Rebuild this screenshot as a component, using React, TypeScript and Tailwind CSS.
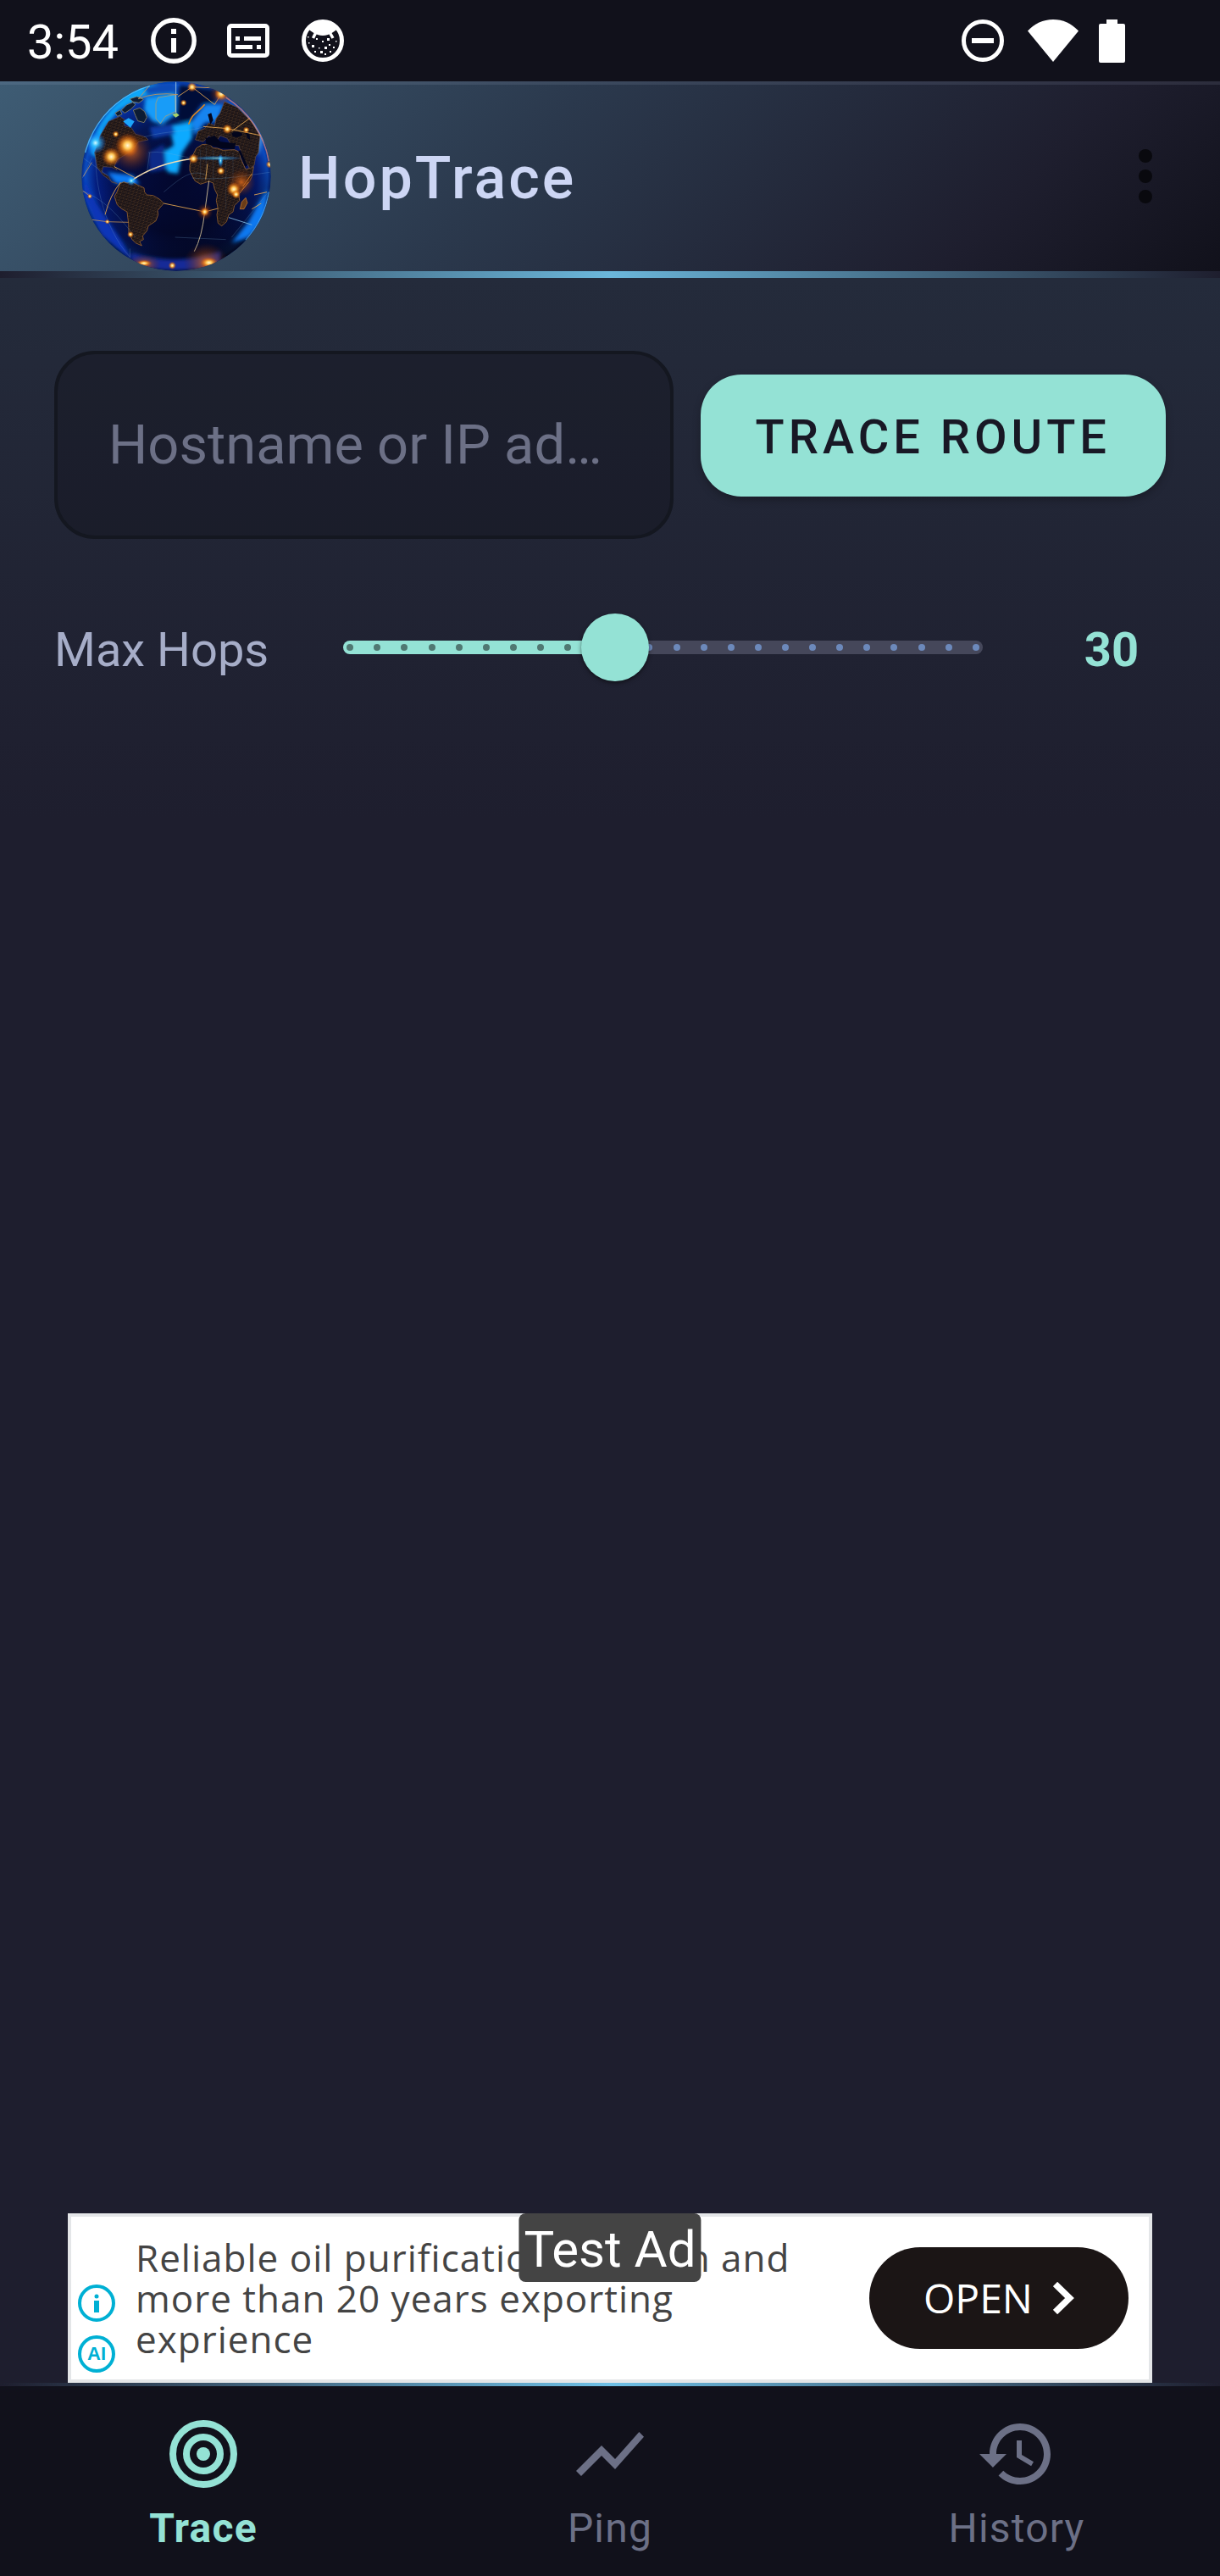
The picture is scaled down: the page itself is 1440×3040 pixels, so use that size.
import { useState } from "react";

const MIN_HOPS = 5;
const MAX_HOPS = 64;
const TICKS = Array.from({ length: 24 }, (_, i) => i);

function InfoIcon() {
  return (
    <svg className="size-[54px]" viewBox="0 0 54 54" fill="none" aria-hidden="true">
      <circle cx="27" cy="27" r="24.2" stroke="#fff" strokeWidth="5.4" />
      <path d="M24 13h6v6h-6zM24 24h6v17h-6z" fill="#fff" />
    </svg>
  );
}

function CaptionsIcon() {
  return (
    <svg className="h-10 w-[50px]" viewBox="0 0 50 40" fill="none" aria-hidden="true">
      <rect x="2.5" y="2.5" width="45" height="35" rx="2.5" stroke="#fff" strokeWidth="5" />
      <path d="M10 15h5v5h-5zM20 15h20v5H20zM10 25h20v5H10zM35 25h5v5h-5z" fill="#fff" />
    </svg>
  );
}

function CatIcon() {
  return (
    <svg className="size-[50px]" viewBox="0 0 50 50" fill="none" aria-hidden="true">
      <circle cx="25" cy="25" r="22.5" stroke="#fff" strokeWidth="5" />
      <path d="M8 11 C14 2 36 2 42 11 L40 13 Q35 17 31 18 Q25 20 19 18 Q15 17 10 13 Z" fill="#fff" />
      <path d="M33 15 L37 22 M17 15 L13.500 22" stroke="#fff" strokeWidth="3.5" />
      <path
        d="M7 20h1.500v1.500H7zM17 22h2v2h-2zM30 22h3v3h-3zM24 25h2v2h-2zM40 25h1.500v1.500H40zM8 27h1.500v1.500H8zM12 30h3v3h-3zM32 29h2v2h-2zM27 32h3v3h-3zM20 33h1.500v1.500H20zM37 32h2v2h-2zM15 37h2v2h-2zM22 37h3v3h-3zM33 37h2v2h-2zM27 40h2v2h-2z"
        fill="#fff"
      />
    </svg>
  );
}

function DoNotDisturbIcon() {
  return (
    <svg className="size-[50px]" viewBox="0 0 50 50" fill="none" aria-hidden="true">
      <circle cx="25" cy="25" r="22.5" stroke="#fff" strokeWidth="5" />
      <path d="M12 22h26v6H12z" fill="#fff" />
    </svg>
  );
}

function WifiIcon() {
  return (
    <svg className="h-[50px] w-[60px]" viewBox="0 0 60 50" aria-hidden="true">
      <path d="M0 13.500C8 5 18 0 30 0s22 5 30 13.500L30 50Z" fill="#fff" />
    </svg>
  );
}

function BatteryIcon() {
  return (
    <svg className="h-[51px] w-[31px]" viewBox="0 0 31 51" aria-hidden="true">
      <path d="M9 0h13v5h7a2 2 0 0 1 2 2v42a2 2 0 0 1-2 2H2a2 2 0 0 1-2-2V7a2 2 0 0 1 2-2h7z" fill="#fff" />
    </svg>
  );
}

function GlobeLogo() {
  return (
    <svg className="size-56 shrink-0" viewBox="108 48 672 672" role="img" aria-label="HopTrace logo">
      <defs>
        <radialGradient id="ocean" cx="0.5" cy="0.5" r="0.5">
          <stop offset="0" stopColor="#030830" />
          <stop offset="0.6" stopColor="#030c44" />
          <stop offset="0.85" stopColor="#04208a" />
          <stop offset="0.96" stopColor="#0c54d4" />
          <stop offset="1" stopColor="#062c8c" />
        </radialGradient>
        <linearGradient id="shade" x1="0.35" y1="0" x2="0.6" y2="1">
          <stop offset="0" stopColor="#0a5fe0" stopOpacity="0.35" />
          <stop offset="0.5" stopColor="#03061c" stopOpacity="0.1" />
          <stop offset="1" stopColor="#03020c" stopOpacity="0.95" />
        </linearGradient>
        <radialGradient id="spark">
          <stop offset="0" stopColor="#fff8d8" />
          <stop offset="0.3" stopColor="#ffc858" />
          <stop offset="0.6" stopColor="#f58418" stopOpacity="0.6" />
          <stop offset="1" stopColor="#c04400" stopOpacity="0" />
        </radialGradient>
        <radialGradient id="ice">
          <stop offset="0" stopColor="#d8fbff" />
          <stop offset="0.3" stopColor="#38c4ff" stopOpacity="0.9" />
          <stop offset="1" stopColor="#0a6cff" stopOpacity="0" />
        </radialGradient>
        <radialGradient id="ember">
          <stop offset="0" stopColor="#e8701c" stopOpacity="0.8" />
          <stop offset="1" stopColor="#6a2000" stopOpacity="0" />
        </radialGradient>
        <pattern id="lights" width="13" height="11" patternUnits="userSpaceOnUse" patternTransform="rotate(17)">
          <rect width="13" height="11" fill="#1c1416" />
          <circle cx="3" cy="3" r="1.800" fill="#7d5430" />
          <circle cx="10" cy="5" r="1.500" fill="#5e4c40" />
          <circle cx="6" cy="9" r="1.300" fill="#6c4a2c" />
        </pattern>
        <filter id="soft" x="-30%" y="-30%" width="160%" height="160%">
          <feGaussianBlur stdDeviation="7" />
        </filter>
        <clipPath id="disc">
          <circle cx="444" cy="384" r="335" />
        </clipPath>
      </defs>
      <g clipPath="url(#disc)">
        <circle cx="444" cy="384" r="336" fill="url(#ocean)" />
        <circle cx="444" cy="384" r="336" fill="url(#shade)" />
        <g filter="url(#soft)">
          <path d="M140 300 C160 180 260 80 350 55 L440 62 L440 95 L330 100 L240 150 L190 210 L160 320Z" fill="#10a8f8" />
          <path d="M335 105 L445 95 L442 165 L395 200 L360 190 L330 150Z" fill="#149cfa" />
          <path d="M420 205 L500 190 L500 250 L465 300 L450 375 L415 370 L385 305 L435 275Z" fill="#0eaaff" />
          <path d="M350 210 L430 200 L440 235 L360 250Z" fill="#0a3ca8" />
          <path d="M345 300 L400 270 L410 360 L350 370Z" fill="#082c88" />
          <path d="M545 130 L612 128 L590 190 L545 195 L510 240 L498 190Z" fill="#1284f0" />
          <path d="M650 140 L720 190 L755 250 L735 310 L690 220Z" fill="#3d84d8" />
          <path d="M768 430 L755 540 L700 600 L640 620 L700 545 L735 480Z" fill="#0c78f0" />
          <path d="M112 380 L125 470 L180 590 L290 685 L255 620 L160 480Z" fill="#0a34b8" />
          <path d="M200 370 L290 380 L315 412 L230 410Z" fill="#0e7cf4" />
          <path d="M285 655 Q440 705 600 650 L600 700 Q440 735 290 700Z" fill="#142a98" />
          <path d="M330 68 Q390 52 440 56 L440 90 L340 96Z" fill="#0c4cb8" />
          <path d="M455 60 L600 80 L580 125 L530 130 L490 190 L450 185Z" fill="#060c38" />
        </g>
        <g fill="url(#lights)" stroke="#b07230" strokeWidth="2" strokeLinejoin="round">
          <path d="M205 190 L245 172 L262 185 L260 205 L285 212 L300 235 L335 245 L345 255 L310 262 L290 290 L260 310 L235 325 L225 348 L235 362 L215 352 L185 350 L180 370 L205 385 L215 405 L235 410 L215 402 L185 380 L165 355 L155 300 L175 240Z" stroke="#5c4a50" />
          <path d="M245 410 L258 404 L270 408 L285 402 L305 414 L330 425 L332 440 L340 450 L362 452 L385 465 L400 480 L378 505 L380 520 L372 542 L345 560 L340 578 L325 595 L328 608 L314 615 L322 630 L300 620 L288 608 L276 585 L275 550 L270 510 L252 500 L235 485 L225 455 L234 440Z" />
          <path d="M515 285 L535 272 L560 270 L575 284 L590 285 L610 292 L650 290 L668 298 L672 320 L690 360 L718 350 L712 385 L705 400 L685 422 L665 440 L668 470 L650 488 L645 510 L630 520 L622 545 L605 560 L592 550 L588 520 L592 500 L586 470 L590 450 L580 430 L575 408 L560 402 L530 412 L510 400 L492 365 L492 345 L500 315Z" />
          <path d="M670 500 L676 475 L690 460 L696 478 L684 500Z" stroke="#e08a30" fill="#6a3c18" />
          <path d="M512 255 L522 225 L545 215 L560 195 L580 205 L585 180 L600 160 L615 120 L660 140 L710 190 L740 240 L735 300 L725 315 L720 345 L705 358 L682 320 L665 275 L640 275 L625 250 L600 240 L585 262 L560 240 L540 262Z" stroke="#6c5040" />
        </g>
        <g fill="#0c1c34" stroke="#8a8468" strokeWidth="2.500">
          <path d="M250 150 L268 132 L290 122 L300 130 L284 146 L262 160Z" />
          <path d="M280 110 L305 102 L328 112 L312 124 L290 120Z" />
          <path d="M292 150 L315 142 L332 155 L340 175 L330 194 L308 188 L300 170Z" />
          <path d="M228 160 L245 150 L252 164 L236 172Z" />
        </g>
        <g fill="#02051c">
          <path d="M548 250 L580 240 L600 262 L655 268 L650 288 L600 284 L550 270Z" />
          <path d="M640 232 Q660 218 680 235 Q668 250 645 244Z" />
          <path d="M556 165 L568 160 L575 185 L565 200Z" />
          <path d="M690 230 L702 225 L706 255 L696 250Z" />
          <path d="M664 295 L672 292 L696 345 L688 350Z" />
        </g>
        <path d="M256 190 L275 178 L296 190 L282 212Z" fill="#1ca4fa" />
        <path d="M372 125 L380 105 L440 95 L442 155 L405 172 L388 198 L372 180Z" fill="#189cf8" stroke="#c9a05a" strokeWidth="2" />
        <path d="M430 165 L445 160 L455 168 L442 176Z" fill="#a8d068" />
        <g fill="none" stroke="#7ab0d8" strokeOpacity="0.45" strokeWidth="1.600">
          <path d="M443 50 L443 160" stroke="#c8e4e8" strokeOpacity="0.9" strokeWidth="2.500" />
          <path d="M160 270 C150 380 180 560 280 670" />
          <path d="M115 320 L200 380 M112 390 L145 320 M110 435 C200 470 250 540 300 600" />
          <path d="M345 300 C420 290 480 330 560 320 M350 300 L340 375" />
          <path d="M400 440 C470 380 500 360 550 380 M640 600 L770 440 M330 245 C420 220 470 230 540 210" />
          <path d="M775 370 C700 380 600 400 500 390" />
          <path d="M630 530 L712 556" strokeWidth="3" strokeOpacity="0.9" />
          <path d="M280 640 L280 672 M440 600 L620 608" />
          <path d="M530 290 V390 M550 280 V385 M575 290 V400 M620 295 V500 M645 300 V420" strokeOpacity="0.25" />
        </g>
        <g fill="none" stroke="#e8a850" strokeWidth="2.600">
          <path d="M350 62 L310 110 Q370 85 450 95" stroke="#c89458" />
          <path d="M450 102 L500 68 L590 72 M500 68 L580 130 L605 90" />
          <path d="M545 130 C520 160 500 160 488 200" strokeWidth="5" stroke="#d88424" />
          <path d="M540 208 L625 215 L745 240" />
          <path d="M705 178 L640 225" />
          <path d="M285 400 Q370 340 500 322" stroke="#f4dcb0" strokeWidth="4.500" />
          <path d="M247 405 Q210 450 192 520" />
          <path d="M400 480 L545 510 L592 498" />
          <path d="M560 400 L545 510 Q535 600 508 650" stroke="#dcc89c" />
          <path d="M145 538 L200 545 L275 547 M112 435 L140 455 M115 385 L145 335" strokeWidth="2" />
          <path d="M555 340 L548 395 M225 350 L300 390" />
          <path d="M765 440 L720 450 M712 500 L745 480" />
          <path d="M680 420 L712 375 M668 445 L700 405" stroke="#f0922c" />
        </g>
        <circle cx="285" cy="295" r="75" fill="url(#ember)" />
        <circle cx="675" cy="405" r="50" fill="url(#ember)" />
        <ellipse cx="550" cy="690" rx="80" ry="70" fill="url(#ember)" />
        <ellipse cx="330" cy="695" rx="60" ry="34" fill="url(#ember)" />
        <circle cx="545" cy="510" r="30" fill="url(#ember)" />
        <circle cx="605" cy="90" r="44" fill="url(#ember)" />
        <g fill="url(#spark)">
          <circle cx="272" cy="275" r="42" />
          <circle cx="214" cy="315" r="34" />
          <circle cx="230" cy="235" r="12" />
          <circle cx="648" cy="430" r="26" />
          <circle cx="656" cy="448" r="16" />
          <circle cx="545" cy="510" r="16" />
          <circle cx="625" cy="217" r="18" />
          <circle cx="602" cy="365" r="15" />
          <circle cx="500" cy="68" r="18" />
          <circle cx="603" cy="92" r="24" />
          <circle cx="505" cy="322" r="18" />
          <circle cx="692" cy="220" r="12" />
          <circle cx="138" cy="455" r="9" />
          <circle cx="200" cy="545" r="9" />
          <circle cx="282" cy="590" r="12" />
          <circle cx="470" cy="124" r="12" />
          <ellipse cx="560" cy="690" rx="32" ry="20" />
          <ellipse cx="330" cy="692" rx="28" ry="12" />
          <circle cx="430" cy="700" r="14" />
          <circle cx="775" cy="342" r="14" />
        </g>
        <g fill="url(#ice)">
          <circle cx="158" cy="266" r="38" />
          <circle cx="285" cy="400" r="18" />
          <ellipse cx="601" cy="328" rx="10" ry="24" />
          <ellipse cx="590" cy="320" rx="90" ry="9" fillOpacity="0.6" />
        </g>
        <path d="M120 300 A335 335 0 0 1 350 62" fill="none" stroke="#5cc8ff" strokeWidth="8" strokeOpacity="0.8" />
        <path d="M620 105 A335 335 0 0 1 772 330" fill="none" stroke="#e08878" strokeWidth="5" strokeOpacity="0.7" />
        <path d="M772 440 A335 335 0 0 1 690 610" fill="none" stroke="#4aa4f0" strokeWidth="4" strokeOpacity="0.8" />
      </g>
    </svg>
  );
}

function TargetIcon() {
  return (
    <svg className="size-24" viewBox="0 0 24 24" fill="none" stroke="currentColor" strokeWidth="2" aria-hidden="true">
      <circle cx="12" cy="12" r="9" />
      <circle cx="12" cy="12" r="5" />
      <circle cx="12" cy="12" r="2" fill="currentColor" stroke="none" />
    </svg>
  );
}

function ChartIcon() {
  return (
    <svg className="size-24" viewBox="0 0 24 24" fill="currentColor" aria-hidden="true">
      <path d="M3.500 18.490l6-6.010 4 4L22 6.920l-1.410-1.410-7.090 7.970-4-4L2 16.990z" />
    </svg>
  );
}

function HistoryIcon() {
  return (
    <svg className="size-24" viewBox="0 0 24 24" fill="currentColor" aria-hidden="true">
      <path d="M13 3c-4.970 0-9 4.030-9 9H1l3.890 3.890.07.14L9 12H6c0-3.870 3.130-7 7-7s7 3.130 7 7-3.130 7-7 7c-1.930 0-3.680-.790-4.940-2.060l-1.420 1.420C8.270 19.990 10.510 21 13 21c4.970 0 9-4.030 9-9s-4.030-9-9-9zm-1 5v5l4.280 2.540.720-1.210-3.500-2.080V8H12z" />
    </svg>
  );
}

function HopSlider({ value, onChange }: { value: number; onChange: (v: number) => void }) {
  const ratio = (value - MIN_HOPS) / (MAX_HOPS - MIN_HOPS);
  return (
    <div className="relative flex h-20 flex-1 items-center px-8">
      <div
        className="flex h-4 w-full items-center justify-between rounded-full px-1"
        style={{
          backgroundImage: `linear-gradient(to right, #94e2d5 ${ratio * 100}%, #45475a ${ratio * 100}%)`,
        }}
      >
        {TICKS.map((i) => (
          <span
            key={i}
            className={
              i / (TICKS.length - 1) <= ratio
                ? "size-2 rounded-full bg-[#507872]"
                : "size-2 rounded-full bg-[#6c89bb]"
            }
          />
        ))}
      </div>
      <input
        id="max-hops"
        type="range"
        min={MIN_HOPS}
        max={MAX_HOPS}
        value={value}
        onChange={(e) => onChange(Number(e.target.value))}
        className="absolute inset-0 h-20 w-full cursor-pointer appearance-none bg-transparent [&::-webkit-slider-thumb]:size-20 [&::-webkit-slider-thumb]:appearance-none [&::-webkit-slider-thumb]:rounded-full [&::-webkit-slider-thumb]:bg-[#94e2d5] [&::-webkit-slider-thumb]:shadow-[0_2px_5px_rgba(0,0,0,0.5)]"
      />
    </div>
  );
}

const NAV_ITEMS = [
  { label: "Trace", Icon: TargetIcon },
  { label: "Ping", Icon: ChartIcon },
  { label: "History", Icon: HistoryIcon },
];

export default function App() {
  const [hops, setHops] = useState(30);
  const [tab, setTab] = useState("Trace");

  return (
    <div className="flex min-h-screen flex-col bg-[#1e1e2e] font-[Roboto,sans-serif]">
      <div className="flex h-24 items-center justify-between bg-[#11111b] pr-28 pl-8 text-white">
        <div className="flex items-center">
          <span className="pt-1 text-[56px] leading-none">3:54</span>
          <div className="ml-[38px] flex items-center gap-9">
            <InfoIcon />
            <CaptionsIcon />
            <div className="ml-0.5">
              <CatIcon />
            </div>
          </div>
        </div>
        <div className="flex items-center">
          <DoNotDisturbIcon />
          <div className="ml-7">
            <WifiIcon />
          </div>
          <div className="ml-6">
            <BatteryIcon />
          </div>
        </div>
      </div>

      <header>
        <div className="flex h-56 items-center bg-[linear-gradient(135deg,#3e5c74_0%,#2b394d_42%,#1e1e2e_80%,#11111b_100%)] pl-24 shadow-[inset_0_4px_0_rgba(205,214,244,0.1)]">
          <GlobeLogo />
          <h1 className="ml-8 flex-1 pt-1 text-[70px] leading-none font-medium tracking-[3px] text-[#cdd6f4]">
            HopTrace
          </h1>
          <button type="button" aria-label="More options" className="mr-10 flex size-24 flex-col items-center justify-center gap-2">
            <span className="size-4 rounded-full bg-[#09090e]" />
            <span className="size-4 rounded-full bg-[#09090e]" />
            <span className="size-4 rounded-full bg-[#09090e]" />
          </button>
        </div>
        <div className="h-2 bg-[linear-gradient(to_right,#1e1e2e,#6bb7db,#1e1e2e)]" />
      </header>

      <main className="flex flex-1 flex-col bg-[linear-gradient(to_bottom,#242b3b_0px,#1e1e2e_640px)]">
        <form className="flex items-center gap-8 px-16 pt-16" onSubmit={(e) => e.preventDefault()}>
          <input
            type="text"
            aria-label="Hostname or IP address"
            placeholder="Hostname or IP address"
            className="mt-[22px] h-[222px] min-w-0 flex-1 rounded-[48px] border-4 border-[#141720] bg-[#11111b]/40 px-[60px] text-[65px] text-ellipsis text-[#cdd6f4] placeholder:text-[#6c7086]"
          />
          <button
            type="submit"
            className="h-36 rounded-[48px] bg-[#94e2d5] px-[65px] pt-1 text-[56px] leading-none font-medium tracking-[5px] whitespace-nowrap text-[#181825] shadow-[0_4px_10px_rgba(0,0,0,0.25)]"
          >
            TRACE ROUTE
          </button>
        </form>

        <div className="mt-16 flex h-32 items-center px-16">
          <label htmlFor="max-hops" className="pt-1.5 text-[56px] leading-none text-[#a6adc8]">
            Max Hops
          </label>
          <div className="ml-14 flex flex-1">
            <HopSlider value={hops} onChange={setHops} />
          </div>
          <output htmlFor="max-hops" className="ml-14 w-32 pt-1.5 text-center text-[56px] leading-none font-bold text-[#94e2d5]">
            {hops}
          </output>
        </div>

        <div className="flex-1" />

        <aside className="relative mx-20 flex h-[200px] items-center border-4 border-[#e4e6e8] bg-white font-['Open_Sans',sans-serif]">
          <div className="flex h-full w-[76px] shrink-0 flex-col items-start justify-end gap-4 pb-2 pl-2 text-[#00b0d4]">
            <svg className="size-11" viewBox="0 0 44 44" fill="none" aria-hidden="true">
              <circle cx="22" cy="22" r="20" stroke="currentColor" strokeWidth="4" />
              <circle cx="22" cy="14" r="2.500" fill="currentColor" />
              <path d="M19 19h6v14h-6z" fill="currentColor" />
            </svg>
            <span className="flex size-11 items-center justify-center rounded-full border-4 border-current font-['Liberation_Sans',sans-serif] text-[22px] leading-none font-bold">
              AI
            </span>
          </div>
          <p className="flex-1 text-[44px] leading-[48px] tracking-[1px] whitespace-nowrap text-[#444444]">
            Reliable oil purification solution and
            <br />
            more than 20 years exporting
            <br />
            exprience
          </p>
          <a
            href="#open"
            className="mr-6 flex h-[120px] shrink-0 items-center gap-6 rounded-full bg-[#1b1515] px-16 text-[48px] leading-none text-white"
          >
            OPEN
            <svg className="h-[38px] w-[25px]" viewBox="0 0 25 38" fill="none" aria-hidden="true">
              <path d="M2.500 2.500 L19.500 19 L2.500 35.500" stroke="#fff" strokeWidth="7.500" />
            </svg>
          </a>
          <span className="absolute -top-1 left-1/2 flex h-[81px] -translate-x-1/2 items-center rounded-lg bg-[#444444] px-1.5 pt-1 font-[Roboto,sans-serif] text-[60px] leading-none whitespace-nowrap text-white">
            Test Ad
          </span>
        </aside>
      </main>

      <div className="h-1 bg-[linear-gradient(to_right,#1e1e2e,#6fc0e6,#1e1e2e)]" />
      <nav className="grid h-56 grid-cols-3 bg-[#11111b]">
        {NAV_ITEMS.map(({ label, Icon }) => (
          <button
            key={label}
            type="button"
            onClick={() => setTab(label)}
            className={
              tab === label
                ? "flex flex-col items-center pt-8 font-bold text-[#94e2d5]"
                : "flex flex-col items-center pt-8 text-[#6c7086]"
            }
          >
            <Icon />
            <span className="mt-3 text-[48px] leading-[56px] tracking-wide">{label}</span>
          </button>
        ))}
      </nav>
    </div>
  );
}
